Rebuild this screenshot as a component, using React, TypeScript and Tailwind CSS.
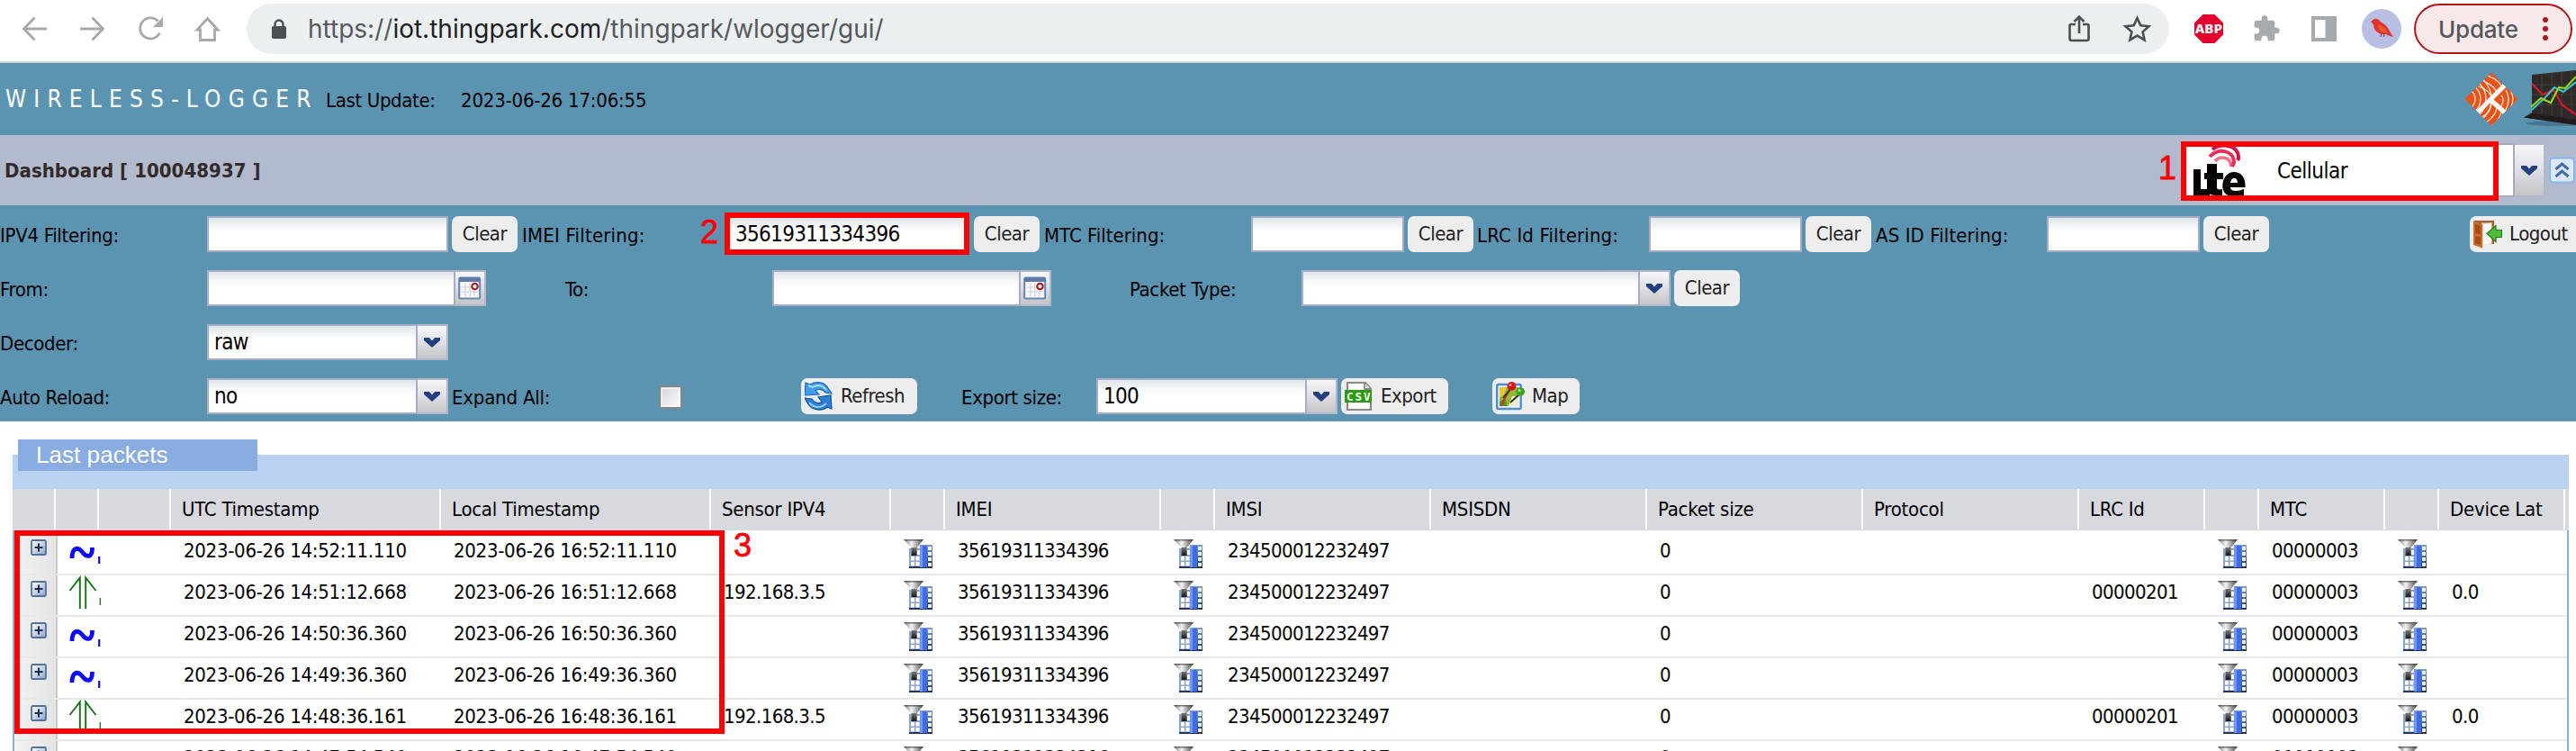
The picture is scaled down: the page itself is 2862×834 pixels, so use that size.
import React from "react";

type ColumnKey = "utc" | "local" | "ip" | "imei" | "imsi" | "msisdn" | "size" | "protocol" | "lrc" | "mtc" | "lat";

interface Column {
  title?: string;
  width: string;
  kind?: "expand" | "direction" | "search";
  field?: ColumnKey;
}

interface Packet {
  kind: "status" | "uplink";
  utc: string;
  local: string;
}

const columns: Column[] = [
  { width: "w-[48px]", kind: "expand" },
  { width: "w-[48px]", kind: "direction" },
  { width: "w-[80px]" },
  { width: "w-[300px]", title: "UTC Timestamp", field: "utc" },
  { width: "w-[300px]", title: "Local Timestamp", field: "local" },
  { width: "w-[200px]", title: "Sensor IPV4", field: "ip" },
  { width: "w-[60px]", kind: "search" },
  { width: "w-[240px]", title: "IMEI", field: "imei" },
  { width: "w-[60px]", kind: "search" },
  { width: "w-[240px]", title: "IMSI", field: "imsi" },
  { width: "w-[240px]", title: "MSISDN", field: "msisdn" },
  { width: "w-[240px]", title: "Packet size", field: "size" },
  { width: "w-[240px]", title: "Protocol", field: "protocol" },
  { width: "w-[140px]", title: "LRC Id", field: "lrc" },
  { width: "w-[60px]", kind: "search" },
  { width: "w-[140px]", title: "MTC", field: "mtc" },
  { width: "w-[60px]", kind: "search" },
  { width: "w-[140px]", title: "Device Lat", field: "lat" },
];

const packets: Packet[] = [
  { kind: "status", utc: "2023-06-26 14:52:11.110", local: "2023-06-26 16:52:11.110" },
  { kind: "uplink", utc: "2023-06-26 14:51:12.668", local: "2023-06-26 16:51:12.668" },
  { kind: "status", utc: "2023-06-26 14:50:36.360", local: "2023-06-26 16:50:36.360" },
  { kind: "status", utc: "2023-06-26 14:49:36.360", local: "2023-06-26 16:49:36.360" },
  { kind: "uplink", utc: "2023-06-26 14:48:36.161", local: "2023-06-26 16:48:36.161" },
  { kind: "status", utc: "2023-06-26 14:47:54.540", local: "2023-06-26 16:47:54.540" },
];

function valueOf(p: Packet, field: ColumnKey): string {
  const up = p.kind === "uplink";
  switch (field) {
    case "utc":
      return p.utc;
    case "local":
      return p.local;
    case "ip":
      return up ? "192.168.3.5" : "";
    case "imei":
      return "35619311334396";
    case "imsi":
      return "234500012232497";
    case "size":
      return "0";
    case "lrc":
      return up ? "00000201" : "";
    case "mtc":
      return "00000003";
    case "lat":
      return up ? "0.0" : "";
    default:
      return "";
  }
}

/* ---------- icons ---------- */

function FunnelGrid() {
  return (
    <svg width="32" height="32" viewBox="0 0 32 32">
      <defs>
        <linearGradient id="fg" x1="0" x2="1" y1="0" y2="0">
          <stop offset="0" stopColor="#777" />
          <stop offset=".4" stopColor="#f4f4f4" />
          <stop offset="1" stopColor="#444" />
        </linearGradient>
        <linearGradient id="fs" x1="0" x2="0" y1="0" y2="1">
          <stop offset="0" stopColor="#777" />
          <stop offset="1" stopColor="#151515" />
        </linearGradient>
        <linearGradient id="fb" x1="0" x2="0" y1="0" y2="1">
          <stop offset="0" stopColor="#7d9ccb" />
          <stop offset="1" stopColor="#22355f" />
        </linearGradient>
      </defs>
      <rect x="6" y="10" width="13" height="22" fill="#8fa3c4" />
      <rect x="18" y="6" width="14" height="26" fill="url(#fb)" />
      <rect x="6" y="30" width="26" height="2" fill="#23365c" />
      <rect x="18" y="7" width="8" height="24" fill="#3f6de8" />
      <rect x="18" y="6" width="3" height="25" fill="#6f97f5" />
      {[8, 14, 20, 26].map((y) => (
        <rect key={y} x="27" y={y} width="4" height="4" fill="#f2f6ff" />
      ))}
      {[19, 25].map((y) => (
        <g key={y} fill="#fff">
          <rect x="8" y={y} width="4" height="4.500" />
          <rect x="13.500" y={y} width="4" height="4.500" />
        </g>
      ))}
      <rect x="15" y="12" width="3" height="5" fill="#fff" />
      <path d="M0 0H22L14.500 9.500V18H8.500V9.500Z" fill="url(#fg)" />
      <path d="M8.500 9H14.500V18H8.500Z" fill="url(#fs)" />
      <path d="M0 0H22L21 1.600H1.500Z" fill="#444" opacity=".7" />
    </svg>
  );
}

function Expander() {
  return (
    <svg width="18" height="18" viewBox="0 0 18 18">
      <defs>
        <linearGradient id="ex" x1="0" x2="1" y1="0" y2="1">
          <stop offset="0" stopColor="#fff" />
          <stop offset="1" stopColor="#8ea4cc" />
        </linearGradient>
      </defs>
      <rect x="1" y="1" width="16" height="16" rx="1.500" fill="url(#ex)" stroke="#54709c" strokeWidth="1.800" />
      <path d="M9 4.500V13.500M4.500 9H13.500" stroke="#1e2f4c" strokeWidth="2" />
    </svg>
  );
}

function StatusGlyph() {
  return (
    <svg width="50" height="46" viewBox="0 0 50 46">
      <path d="M18 27C18 16 23.500 13.500 29 19.500C34 26 40.500 27.500 40.500 15" fill="none" stroke="#0b09fb" strokeWidth="4.800" />
      <path d="M48.200 25V33" stroke="#0b09fb" strokeWidth="2.200" />
    </svg>
  );
}

function UplinkGlyph() {
  return (
    <svg width="50" height="46" viewBox="0 0 50 46">
      <path d="M15.500 17L26.800 2.500V37M44.500 17L33.200 2.500V37" fill="none" stroke="#137313" strokeWidth="1.900" />
      <path d="M49.300 25V33" stroke="#137313" strokeWidth="1.300" />
    </svg>
  );
}

function RefreshIcon() {
  return (
    <svg width="32" height="32" viewBox="0 0 32 32">
      <path d="M1 1L6 3C13 -1 22 0 26 7L30 13L23 12C20 7 14 8 12 10L16 14L0 15Z" fill="#3f9dea" stroke="#1669b8" strokeWidth="1.200" />
      <path d="M4 4L9 6C14 2.500 20 3.500 24 9" fill="none" stroke="#a9dcff" strokeWidth="2" />
      <path d="M30 30L25 28C19 33 9 32 4 25L0 18L8 19C12 25 18 24 19 22L15 17L29 15Z" fill="#2c7fd6" stroke="#0f539f" strokeWidth="1.200" />
      <path d="M5 23C10 29 18 30 24 24" fill="none" stroke="#8ecbff" strokeWidth="2" />
    </svg>
  );
}

function CsvIcon() {
  return (
    <svg width="32" height="32" viewBox="0 0 32 32">
      <path d="M3 1H23L29 8V31H3Z" fill="#fff" stroke="#8a8a8a" strokeWidth="2.200" />
      <path d="M22 1V8H29" fill="#ddd" stroke="#8a8a8a" strokeWidth="1.800" />
      <rect x="0" y="9" width="30" height="14" fill="#2c9a12" />
      <text x="15" y="20.500" textAnchor="middle" fontSize="12.500" fontWeight="700" fill="#fff" fontFamily="DejaVu Sans Mono, monospace" textLength="26">
        CSV
      </text>
    </svg>
  );
}

function MapIcon() {
  return (
    <svg width="32" height="32" viewBox="0 0 32 32">
      <rect x="1.200" y="3" width="26.500" height="27" rx="1.500" fill="#eef6ff" stroke="#4b8fd2" strokeWidth="2.400" />
      <rect x="4" y="6" width="21" height="21" fill="#8fbb2e" />
      <path d="M4 6H12L9 14L4 18Z" fill="#e8c832" />
      <path d="M14 27L18 16H25V27Z" fill="#f1ead0" />
      <path d="M4 22L11 18L12 27H4Z" fill="#4a9a2a" />
      <path d="M6 27L10 18L16 8" fill="none" stroke="#d8302c" strokeWidth="2.200" />
      <path d="M16 8L8 18M26 14L16 23" stroke="#333" strokeWidth="2" />
      <circle cx="17.500" cy="4.900" r="4.900" fill="#d9151b" />
      <circle cx="16" cy="3.400" r="1.500" fill="#ff9a94" />
      <circle cx="27.200" cy="11" r="4.800" fill="#3fa421" />
      <circle cx="26" cy="9.500" r="1.500" fill="#b4ef8f" />
    </svg>
  );
}

function LogoutIcon() {
  return (
    <svg width="32" height="32" viewBox="0 0 32 32">
      <rect x="1" y="1" width="22" height="26" fill="#a9632f" />
      <rect x="9" y="3.500" width="11.500" height="24" fill="#d9d9d9" />
      <path d="M11 5L20 3.500V26L11 28Z" fill="#f6f6f6" />
      <path d="M0 1.500L10 5V31.500L0 28Z" fill="#c96a2c" />
      <path d="M2 5L8 7V16L2 15ZM2 18L8 19.500V28L2 26Z" fill="#a64d18" />
      <path d="M15 15.500L25 6.500V11.500H31.500V19.500H25V24.500Z" fill="#4fbf3a" stroke="#237a17" strokeWidth="1.200" />
    </svg>
  );
}

function CalendarIcon() {
  return (
    <svg width="26" height="26" viewBox="0 0 26 26">
      <rect x="1.200" y="1.500" width="23" height="23" rx="1.500" fill="#f6f8fb" stroke="#6a83b5" strokeWidth="2" />
      <rect x="1" y="1" width="23.400" height="5" fill="#5e79ab" />
      <path d="M8 8V22M13 8V22M18 8V22M4 12H22M4 17H22" stroke="#d0d3dc" strokeWidth="1.200" />
      <circle cx="18.500" cy="11" r="3.200" fill="#fff" stroke="#a52222" strokeWidth="2.200" />
    </svg>
  );
}

function LteLogo() {
  return (
    <svg width="60" height="54" viewBox="0 0 60 54">
      <g fill="none">
        <path d="M25 16C30 10 42 10 43 22" stroke="#f2708c" strokeWidth="3.600" />
        <path d="M19 11C28 1 46 3 46 18L44 22" stroke="#e5305a" strokeWidth="4" />
        <path d="M22 3C32 -5 52 -2 51 13L50 15" stroke="#cf1245" strokeWidth="4" />
      </g>
      <path d="M1 25H9V47H19V54H1Z" fill="#070304" />
      <path d="M16 19H27V29H34V36H27V45C27 48 30 47.500 33 47V54H26C19 54 16 51 16 46V36H13V29H16Z" fill="#070304" />
      <path d="M46 28C53 28 58.500 33 58.500 43V45H42C42 50 50 50 57 47V54H40C29 51 32 28 46 28ZM42 40H50C50 33 43 33 42 40Z" fill="#070304" fillRule="evenodd" />
    </svg>
  );
}

function BrandDiamond() {
  return (
    <svg width="60" height="60" viewBox="0 0 60 60">
      <defs>
        <clipPath id="dia">
          <path d="M30 0.500L59.500 30L30 59.500L0.500 30Z" />
        </clipPath>
      </defs>
      <g clipPath="url(#dia)">
        <rect width="60" height="60" fill="#ea5318" />
        <g fill="none" stroke="#fff" strokeWidth="1.100">
          {[12, 18, 24, 30].map((r) => (
            <circle key={r} cx="0" cy="30" r={r} />
          ))}
          <path d="M20 9Q36 17 37 25M26 4Q41 10 43 20M16 16Q28 20 31 30M46 20Q52 30 46 42M51 20Q57 30 51 40M41 26Q45 30 41 38" />
          <path d="M36 38Q36 48 24 56M30 34Q30 45 19 50M41 42Q41 52 30 60" />
        </g>
        <path d="M45 14.500L12 47.500M29 31L45 45" stroke="#fff" strokeWidth="5" />
      </g>
    </svg>
  );
}

function ChartLogo() {
  return (
    <svg width="58" height="64" viewBox="0 0 58 64">
      <ellipse cx="36" cy="59" rx="34" ry="3" fill="#3c6478" opacity=".6" />
      <path d="M9 5L58 0V60L0 52.500L9 47Z" fill="#2f2a28" />
      <path d="M0 52.500L10 48L58 55V61Z" fill="#1f1c1b" />
      <path d="M9 16H58M9 27H58M9 38H58M20 4V48M31 3V50M42 2V52M53 1V54" stroke="#4a4440" strokeWidth=".8" />
      <path d="M9 15L21 27L33 22L43 39L58 49" fill="none" stroke="#d3162c" strokeWidth="2.200" />
      <path d="M9 44L24 30L34 19L44 24L58 13" fill="none" stroke="#3cc0cf" strokeWidth="2.200" />
      <path d="M8 41L19 31L30 36L39 19L46 20L58 7" fill="none" stroke="#93d51c" strokeWidth="2.200" />
    </svg>
  );
}

/* ---------- form parts ---------- */

function Label({ className, children, tracking = "tracking-[-0.35px]" }: { className: string; children: React.ReactNode; tracking?: string }) {
  return <div className={`h-10 shrink-0 whitespace-nowrap leading-[43px] text-[22px] text-black ${tracking} ${className}`}>{children}</div>;
}

function Field({ className, children }: { className: string; children?: React.ReactNode }) {
  return (
    <div className={`h-10 shrink-0 border-2 border-[#a7adc8] bg-linear-to-b from-[#dfe5e9] to-white to-40% px-[6px] text-[24px] leading-[36px] tracking-[-0.7px] text-black ${className}`}>
      {children}
    </div>
  );
}

function Trigger({ children, className = "h-10 w-[36px]" }: { children: React.ReactNode; className?: string }) {
  return (
    <div className={`flex shrink-0 items-center justify-center border-y-2 border-r-2 border-[#b4b6cc] bg-linear-to-b from-[#f8f8fa] via-[#dedfe3] to-[#c4c4c7] ${className}`}>
      {children}
    </div>
  );
}

function Chevron() {
  return (
    <svg width="20" height="14" viewBox="0 0 20 14">
      <path d="M1 2H7L10 5.500L13 2H19V5L10 13L1 5Z" fill="#233f7e" />
    </svg>
  );
}

function Btn({ className, icon, children }: { className: string; icon?: React.ReactNode; children: React.ReactNode }) {
  return (
    <button className={`flex h-10 shrink-0 items-center rounded-[7px] bg-[#ededed] text-[22px] tracking-[-0.5px] text-[#222] ${icon ? "gap-2 pl-1" : "justify-center"} ${className}`}>
      {icon}
      <span className="whitespace-nowrap leading-none">{children}</span>
    </button>
  );
}

function BrowserBar() {
  return (
    <div className="flex h-[70px] items-start border-b-2 border-[#d0d3d6] bg-white pt-1 font-['Inter',sans-serif] tracking-normal">
      <div className="flex h-14 w-[274px] shrink-0 items-center pl-6">
        <svg width="224" height="32" viewBox="0 0 224 32" fill="none" stroke="#a6a9ac" strokeWidth="2.800">
          <path d="M28 16H3M14.500 3.500L2.500 16L14.500 28.500" />
          <path d="M65 16H90M78.500 3.500L90.500 16L78.500 28.500" />
          <path d="M153.500 20.500A11.500 11.500 0 1 1 151.500 7.500" />
          <path d="M157 3V14H146Z" fill="#a6a9ac" stroke="none" />
          <path d="M206.500 4.500L218 17H214.500V28.500H198.500V17H195Z" />
        </svg>
      </div>
      <div className="flex h-14 w-[2136px] shrink-0 items-center rounded-full bg-[#ebeff0] pl-7">
        <svg width="16" height="22" viewBox="0 0 16 22">
          <path d="M3.500 9V6A4.500 4.500 0 0 1 12.500 6V9" fill="none" stroke="#4b4e52" strokeWidth="2.400" />
          <rect x="0" y="8" width="16" height="14" rx="2" fill="#4b4e52" />
        </svg>
        <div className="ml-[24px] whitespace-nowrap text-[28px] text-[#56595d]">
          https://<span className="text-[#202124]">iot.thingpark.com</span>/thingpark/wlogger/gui/
        </div>
        <svg className="ml-auto mr-[20px]" width="92" height="32" viewBox="0 0 92 32" fill="none" stroke="#4b4e52" strokeWidth="2.600">
          <path d="M8 11H3Q1.500 11 1.500 12.500V27Q1.500 29 3.500 29H20.500Q22.500 29 22.500 27V12.500Q22.500 11 21 11H16M12 21V3M6.500 8L12 2.500L17.500 8" />
          <path d="M76.500 4L80.300 12.300L89.500 13.300L82.600 19.400L84.600 28.300L76.500 23.600L68.400 28.300L70.400 19.400L63.500 13.300L72.700 12.300Z" />
        </svg>
      </div>
      <div className="flex h-14 w-[272px] shrink-0 items-center">
        <svg className="ml-[27px]" width="34" height="34" viewBox="0 0 34 34">
          <path d="M10.500 1H23.500L33 10.500V23.500L23.500 33H10.500L1 23.500V10.500Z" fill="#e4002e" />
          <text x="17" y="22" textAnchor="middle" fontSize="14" fontWeight="700" fill="#fff" textLength="30" lengthAdjust="spacingAndGlyphs" fontFamily="Open Sans, sans-serif">
            ABP
          </text>
        </svg>
        <svg className="ml-[31px]" width="32" height="32" viewBox="0 0 24 24" fill="#a8abae">
          <path d="M20.500 11H19V7c0-1.100-.9-2-2-2h-4V3.500a2.500 2.500 0 0 0-5 0V5H4c-1.100 0-2 .9-2 2v3.800h1.500a2.700 2.700 0 0 1 0 5.400H2V20c0 1.100.9 2 2 2h3.800v-1.500a2.700 2.700 0 0 1 5.400 0V22H17c1.100 0 2-.9 2-2v-4h1.500a2.500 2.500 0 0 0 0-5z" />
        </svg>
        <svg className="ml-[34px]" width="28" height="28" viewBox="0 0 28 28">
          <path d="M0 0H28V28H0ZM4 4V24H15.500V4Z" fill="#a6a9ad" fillRule="evenodd" />
        </svg>
        <svg className="ml-[28px]" width="44" height="44" viewBox="0 0 44 44">
          <circle cx="22" cy="22" r="22" fill="#b9bfe3" />
          <path d="M10 14L13 11.500C15 10 19 11 20.500 14C26 17 29 20 31 25L35 31L30 29.500L27 28C20 29 13 25 13 17Z" fill="#e0322f" />
          <path d="M18 17C24 19 27 22 29 27C22 27 18 23 18 17Z" fill="#f0562f" />
          <path d="M22 27L21 31M25 27.500L24.500 31" stroke="#6a3a3a" strokeWidth="1" />
        </svg>
      </div>
      <div className="flex h-14 w-[176px] shrink-0 items-center rounded-full border-2 border-[#b3141c] bg-[#f9e8e8] pl-[25px] text-[26px] text-[#54595d]">
        <span className="w-[88px] whitespace-nowrap font-medium tracking-[-0.2px]">Update</span>
        <span className="ml-[28px] flex flex-col gap-1">
          <i className="size-[6px] rounded-full bg-[#b3141c]" />
          <i className="size-[6px] rounded-full bg-[#b3141c]" />
          <i className="size-[6px] rounded-full bg-[#b3141c]" />
        </span>
      </div>
    </div>
  );
}

function Filters() {
  return (
    <div className="flex h-[240px] flex-col gap-5 bg-[#5b94b1] pt-3">
      <div className="flex">
        <Label className="w-[230px]" tracking="tracking-[-0.3px]">IPV4 Filtering:</Label>
        <Field className="w-[268px]" />
        <Btn className="ml-1 w-[73px]">Clear</Btn>
        <Label className="w-[230px] pl-[5px]" tracking="tracking-[0.2px]">IMEI Filtering:</Label>
        <Field className="w-[268px] ml-[4px]">35619311334396</Field>
        <Btn className="ml-[5px] w-[73px]">Clear</Btn>
        <Label className="w-[235px] pl-[5px]" tracking="tracking-[0px]">MTC Filtering:</Label>
        <Field className="w-[170px]" />
        <Btn className="ml-1 w-[73px]">Clear</Btn>
        <Label className="w-[195px] pl-[4px]" tracking="tracking-[0.15px]">LRC Id Filtering:</Label>
        <Field className="w-[170px]" />
        <Btn className="ml-1 w-[73px]">Clear</Btn>
        <Label className="w-[195px] pl-[5px]" tracking="tracking-[0.1px]">AS ID Filtering:</Label>
        <Field className="w-[170px]" />
        <Btn className="ml-1 w-[73px]">Clear</Btn>
        <Btn className="ml-[223px] w-[130px]" icon={<LogoutIcon />}>Logout</Btn>
      </div>
      <div className="flex">
        <Label className="w-[230px]">From:</Label>
        <Field className="w-[276px]" />
        <Trigger className="h-10 w-[34px]"><CalendarIcon /></Trigger>
        <Label className="w-[318px] pl-[88px]">To:</Label>
        <Field className="w-[276px]" />
        <Trigger className="h-10 w-[34px]"><CalendarIcon /></Trigger>
        <Label className="w-[278px] pl-[87px]">Packet Type:</Label>
        <Field className="w-[376px]" />
        <Trigger className="h-10 w-[34px]"><Chevron /></Trigger>
        <Btn className="ml-1 w-[73px]">Clear</Btn>
      </div>
      <div className="flex">
        <Label className="w-[230px]">Decoder:</Label>
        <Field className="w-[234px]">raw</Field>
        <Trigger className="h-10 w-[34px]"><Chevron /></Trigger>
      </div>
      <div className="flex">
        <Label className="w-[230px]">Auto Reload:</Label>
        <Field className="w-[234px]">no</Field>
        <Trigger className="h-10 w-[34px]"><Chevron /></Trigger>
        <Label className="w-[234px] pl-[4px]" tracking="tracking-[-0.2px]">Expand All:</Label>
        <div className="mt-2 size-[26px] shrink-0 border-2 border-[#85868a] bg-linear-to-br from-[#cfd2da] to-white p-[3px] outline-1 -outline-offset-4 outline-[#f4f4f4]" />
        <Btn className="ml-[132px] w-[129px]" icon={<RefreshIcon />}>Refresh</Btn>
        <Label className="w-[199px] pl-[49px]">Export size:</Label>
        <Field className="w-[234px]">100</Field>
        <Trigger className="h-10 w-[34px]"><Chevron /></Trigger>
        <Btn className="ml-1 w-[119px]" icon={<CsvIcon />}>Export</Btn>
        <Btn className="ml-[49px] w-[97px]" icon={<MapIcon />}>Map</Btn>
      </div>
    </div>
  );
}

function PacketTable() {
  return (
    <div className="ml-[14px] mt-[37px] w-[2840px]">
      <div className="h-[38px] bg-[#b9d2f2] pl-[6px]">
        <div className="relative -top-[17px] h-[35px] w-[266px] bg-[#89ace1] pl-[20px] font-['Liberation_Sans',sans-serif] text-[26px] leading-[35px] tracking-[0.05px] text-white">
          Last packets
        </div>
      </div>
      <div className="flex h-[46px] bg-[#d7d9df]">
        {columns.map((c, i) => (
          <div key={i} className={`h-[45px] shrink-0 whitespace-nowrap border-r-2 border-white pl-[12px] text-[22px] leading-[45px] tracking-[-0.25px] text-black ${c.width}`}>
            {c.title}
          </div>
        ))}
      </div>
      <div className="h-[245px] overflow-hidden border-x-2 border-[#8db0e0] pt-[4px]">
        {packets.map((p, r) => (
          <div key={r} className="-ml-[2px] flex h-[46px] border-b-2 border-[#e8e8e8]">
            {columns.map((c, i) => {
              if (c.kind === "expand") {
                return (
                  <div key={i} className="ml-[2px] flex w-[48px] shrink-0 justify-center border-r-2 border-[#c9c9c9] bg-linear-to-r from-[#f3f3f3] to-[#e3e3e3] pl-[8px] pt-[6px]">
                    <Expander />
                  </div>
                );
              }
              if (c.kind === "direction") {
                return (
                  <div key={i} className="-mr-[2px] w-[48px] shrink-0">
                    <div className="-ml-[2px] w-[50px]">{p.kind === "status" ? <StatusGlyph /> : <UplinkGlyph />}</div>
                  </div>
                );
              }
              return (
                <div
                  key={i}
                  className={`shrink-0 whitespace-nowrap pl-[14px] text-[22px] leading-[38px] text-black ${c.width} ${c.field === "utc" || c.field === "local" ? "tracking-[-0.28px]" : ""}`}
                >
                  {c.kind === "search" ? (
                    <div className="pt-[6px]">
                      <FunnelGrid />
                    </div>
                  ) : (
                    c.field && valueOf(p, c.field)
                  )}
                </div>
              );
            })}
          </div>
        ))}
      </div>
    </div>
  );
}

function Callout({ className, children }: { className: string; children: React.ReactNode }) {
  return (
    <div className={`absolute font-['Liberation_Sans',sans-serif] text-[36px] leading-none tracking-normal text-[#fb0007] [-webkit-text-stroke:0.8px_#fb0007] ${className}`}>
      {children}
    </div>
  );
}

export default function App() {
  return (
    <div className="relative h-[834px] w-[2862px] overflow-hidden bg-white font-['DejaVu_Sans_Condensed','DejaVu_Sans',sans-serif] [font-stretch:condensed] tracking-[-0.6px]">
      <BrowserBar />
      <div className="flex h-20 items-center bg-[#5b94b1]">
        <div className="w-[362px] shrink-0 whitespace-nowrap pl-[6px] text-[26px] tracking-[8.200px] text-white">WIRELESS-LOGGER</div>
        <div className="w-[150px] shrink-0 pt-[2px] text-[22px] tracking-[-0.35px]">Last Update:</div>
        <div className="shrink-0 pt-[2px] text-[22px] tracking-[-0.2px]">2023-06-26 17:06:55</div>
        <div className="ml-auto flex items-center">
          <BrandDiamond />
          <div className="ml-[6px]">
            <ChartLogo />
          </div>
        </div>
      </div>
      <div className="flex h-[78px] items-center bg-[#b1bbcd]">
        <div className="grow pl-[5px] text-[22px] font-bold tracking-[0.05px] text-[#332a2b]">Dashboard [ 100048937 ]</div>
        <div className="flex h-[60px] w-[368px] shrink-0 items-end border-2 border-[#a9a9c4] bg-white pl-[8px] text-[24px]">
          <LteLogo />
          <span className="ml-[34px] self-center pt-[2px] tracking-[-0.5px]">Cellular</span>
        </div>
        <Trigger className="h-[60px] w-[34px]"><Chevron /></Trigger>
        <svg className="ml-[4px] mr-px shrink-0" width="29" height="30" viewBox="0 0 29 30">
          <rect x="1" y="1.500" width="27" height="27" rx="4" fill="#d9e9fb" stroke="#8ab4ec" strokeWidth="2" />
          <path d="M7.500 14L14.500 8L21.500 14M7.500 22L14.500 16L21.500 22" fill="none" stroke="#426da6" strokeWidth="3" />
        </svg>
      </div>
      <Filters />
      <PacketTable />
      <div className="absolute left-[2423px] top-[157px] h-[66px] w-[353px] border-6 border-[#fe0000]" />
      <div className="absolute left-[805px] top-[236px] h-[47px] w-[272px] border-6 border-[#fe0000]" />
      <div className="absolute left-[16px] top-[589px] h-[226px] w-[789px] border-6 border-[#fe0000]" />
      <Callout className="left-[2398px] top-[169px]">1</Callout>
      <Callout className="left-[778px] top-[240px]">2</Callout>
      <Callout className="left-[815px] top-[588px]">3</Callout>
    </div>
  );
}
